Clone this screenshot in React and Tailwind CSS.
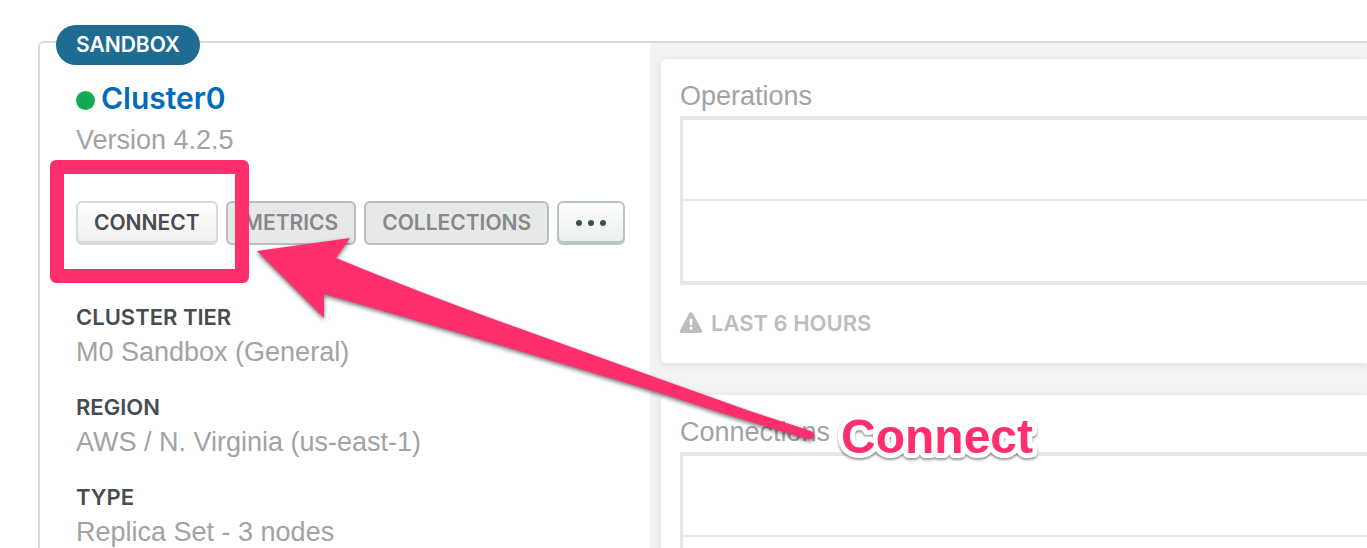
import React from "react";

const details = [
  { label: "Cluster Tier", value: "M0 Sandbox (General)" },
  { label: "Region", value: "AWS / N. Virginia (us-east-1)" },
  { label: "Type", value: "Replica Set - 3 nodes" },
];

const buttonBase =
  "h-11 rounded-md border-2 px-4 text-[21px] leading-6 font-semibold uppercase";

function WarningIcon() {
  return (
    <svg viewBox="0 0 24 22" className="h-[22px] w-6" aria-hidden="true">
      <path
        d="M10.2 1.300c.8-1.400 2.800-1.400 3.600 0l9.200 17.200c.8 1.400 0 2.500-1.500 2.500H2.500C1 21 .2 19.900 1 18.500z"
        fill="#bcbdbe"
      />
      <path d="M10.500 7h3l-.5 6.500h-2z" fill="#fff" />
      <rect x="10.500" y="15" width="3" height="2.800" rx="0.800" fill="#fff" />
    </svg>
  );
}

function ChartCard({ title, range }) {
  return (
    <section className="rounded-l-md bg-white pt-5 pb-[27px] pl-[19px] shadow-[0_2px_10px_rgba(0,0,0,0.09)]">
      <h2 className="h-[37px] text-[27px] leading-[34px] text-[#a2a3a3]">{title}</h2>
      <div className="flex h-[169px] flex-col border-y-4 border-l-[3px] border-[#e7e9e8]">
        <div className="h-[81px] border-b-2 border-[#e7e9e8]" />
        <div className="flex-1" />
      </div>
      {range && (
        <p className="mt-[25px] -ml-px flex h-[26px] items-center gap-2 font-['Inter',sans-serif] text-[22px] font-semibold text-[#bcbdbe] uppercase">
          <WarningIcon />
          {range}
        </p>
      )}
    </section>
  );
}

function Annotations() {
  return (
    <div className="pointer-events-none absolute inset-0">
      <div className="absolute top-[160px] left-[50px] h-[123px] w-[199px] rounded-md border-[14px] border-[#ff2e6c]" />
      <svg
        viewBox="0 0 1367 548"
        className="absolute top-0 left-0 h-[548px] w-[1367px]"
      >
        <path
          d="M257 251L350 238L336 258Q416 291 496 320L660 379L747 410L811 431Q815 433 814 436Q812 440 807 439L715 411L660 393Q500 345 418 321L324 294V318Z"
          fill="#ff2e6c"
          className="drop-shadow-[0_2px_2px_rgba(0,0,0,0.55)]"
        />
        <text
          x="841"
          y="453"
          fill="#ff2e6c"
          stroke="#fff"
          strokeWidth="10"
          strokeLinejoin="round"
          paintOrder="stroke"
          className="text-5xl font-bold drop-shadow-[0_2px_1px_rgba(0,0,0,0.4)]"
        >
          Connect
        </text>
      </svg>
    </div>
  );
}

export default function App() {
  return (
    <div className="relative h-screen overflow-hidden bg-white pt-[41px] pl-[38px] font-['Liberation_Sans',sans-serif]">
      <main className="relative flex rounded-tl-md border-t-2 border-l-2 border-[#d7dbda]">
        <span className="absolute -top-[18px] left-4 flex h-10 items-center rounded-full bg-[#1f6c92] px-5 font-['Inter',sans-serif] text-[21px] font-semibold text-white uppercase">
          Sandbox
        </span>

        <div className="w-[610px] shrink-0 pt-[35px] pl-9">
          <h1 className="flex h-10 items-center gap-[6px]">
            <span className="mt-1 size-[19px] rounded-full bg-[#13aa52]" />
            <a href="#cluster" className="font-['Inter',sans-serif] text-[30px] leading-10 font-semibold text-[#006cbc]">
              Cluster0
            </a>
          </h1>
          <p className="text-[27px] leading-[44px] text-[#a2a3a3]">Version 4.2.5</p>

          <div className="mt-[39px] flex gap-2 font-['Inter',sans-serif]">
            <button
              type="button"
              className={`${buttonBase} border-[#d7dbdb] bg-linear-to-b from-white to-[#efefef] text-[#464c4f] shadow-[inset_0_-2px_0_#d7dbdb]`}
            >
              Connect
            </button>
            <button type="button" className={`${buttonBase} border-[#babdbc] bg-[#e7e9e8] text-[#86888b]`}>
              Metrics
            </button>
            <button type="button" className={`${buttonBase} border-[#babdbc] bg-[#e7e9e8] text-[#86888b]`}>
              Collections
            </button>
            <button
              type="button"
              aria-label="More options"
              className="flex h-11 w-[68px] items-center justify-center gap-[6px] rounded-md border-2 border-[#b8c4c2] bg-linear-to-b from-white to-[#e9eeec] shadow-[inset_0_-2px_0_#b8c4c2]"
            >
              <span className="size-[6px] rounded-full bg-[#3d4f58]" />
              <span className="size-[6px] rounded-full bg-[#3d4f58]" />
              <span className="size-[6px] rounded-full bg-[#3d4f58]" />
            </button>
          </div>

          <dl className="mt-14 flex flex-col gap-5">
            {details.map((item) => (
              <div key={item.label}>
                <dt className="font-['Inter',sans-serif] text-[22px] leading-8 font-semibold text-[#464c4f] uppercase">
                  {item.label}
                </dt>
                <dd className="text-[27px] leading-[38px] text-[#a2a3a3]">{item.value}</dd>
              </div>
            ))}
          </dl>
        </div>

        <div className="flex min-w-0 flex-1 flex-col gap-8 bg-[#f2f4f3] pt-4 pl-[11px]">
          <ChartCard title="Operations" range="Last 6 hours" />
          <ChartCard title="Connections" />
        </div>
      </main>
      <Annotations />
    </div>
  );
}
